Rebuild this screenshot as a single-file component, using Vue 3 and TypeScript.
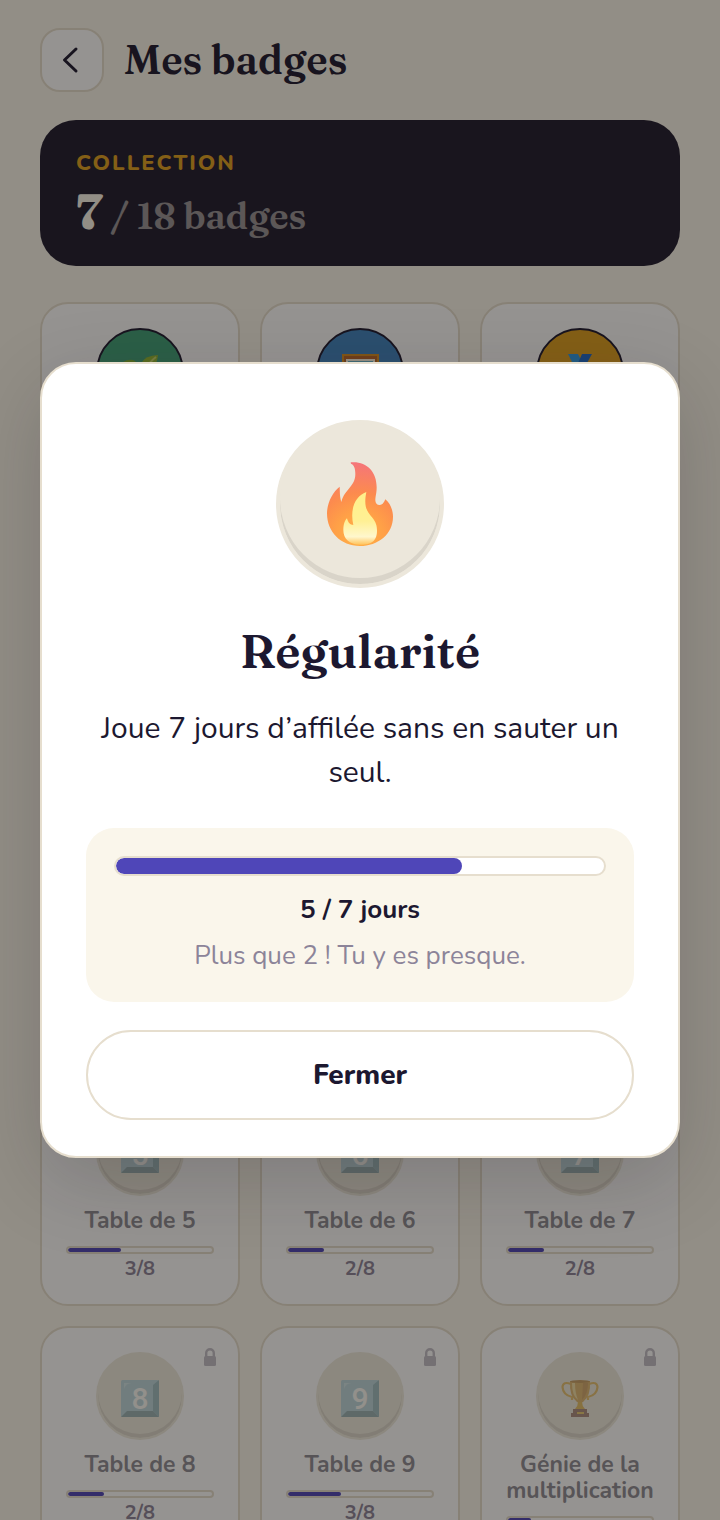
<script setup lang="ts">
import { computed, ref } from 'vue'

type Glyph = 'sprout' | 'frame' | 'medal' | 'flame' | 'trophy' | 'key'

interface Badge {
  name: string
  glyph: Glyph
  digit?: number
  tone?: 'green' | 'blue' | 'amber'
  done?: number
  goal?: number
}

const total = 18
const unlocked = 7

const badges: Badge[] = [
  { name: 'Premiers pas', glyph: 'sprout', tone: 'green' },
  { name: 'Galerie', glyph: 'frame', tone: 'blue' },
  { name: 'Médaille', glyph: 'medal', tone: 'amber' },
  { name: 'Table de 1', glyph: 'key', digit: 1, tone: 'green' },
  { name: 'Table de 2', glyph: 'key', digit: 2, tone: 'blue' },
  { name: 'Table de 10', glyph: 'medal', tone: 'amber' },
  { name: 'Régularité', glyph: 'flame', done: 5, goal: 7 },
  { name: 'Table de 3', glyph: 'key', digit: 3, tone: 'green' },
  { name: 'Table de 4', glyph: 'key', digit: 4, done: 4, goal: 8 },
  { name: 'Table de 5', glyph: 'key', digit: 5, done: 3, goal: 8 },
  { name: 'Table de 6', glyph: 'key', digit: 6, done: 2, goal: 8 },
  { name: 'Table de 7', glyph: 'key', digit: 7, done: 2, goal: 8 },
  { name: 'Table de 8', glyph: 'key', digit: 8, done: 2, goal: 8 },
  { name: 'Table de 9', glyph: 'key', digit: 9, done: 3, goal: 8 },
  { name: 'Génie de la multiplication', glyph: 'trophy', done: 2, goal: 12 },
]

const open = ref(true)
const selected = ref<Badge>(badges[6])

function percent(b: Badge): string {
  return b.goal ? `${Math.floor(((b.done ?? 0) / b.goal) * 100)}%` : '0%'
}

function show(b: Badge): void {
  if (b.glyph === 'flame') {
    selected.value = b
    open.value = true
  }
}

const remaining = computed(() => (selected.value.goal ?? 0) - (selected.value.done ?? 0))
</script>

<template>
  <div class="screen">
    <main class="page">
      <header class="top">
        <button class="back" type="button" aria-label="Retour">
          <svg viewBox="0 0 32 32" width="32" height="32" aria-hidden="true">
            <path d="M20 5 8.500 16 20 27" fill="none" stroke="currentColor" stroke-width="3" stroke-linecap="round" stroke-linejoin="round" />
          </svg>
        </button>
        <h1>Mes badges</h1>
      </header>

      <section class="summary">
        <p class="eyebrow">COLLECTION</p>
        <p class="count"><strong>{{ unlocked }}</strong> <span>/ {{ total }} badges</span></p>
      </section>

      <section class="grid">
        <button v-for="b in badges" :key="b.name" type="button" class="card" :class="{ locked: !b.tone }" @click="show(b)">
          <svg v-if="!b.tone" class="lock" viewBox="0 0 12 18" width="12" height="18" aria-hidden="true">
            <path d="M2.200 9V5a3.800 3.800 0 0 1 7.600 0v4" fill="none" stroke="currentColor" stroke-width="2.400" />
            <rect y="8" width="12" height="10" rx="1.500" fill="currentColor" />
          </svg>
          <span class="disc" :class="b.tone">
            <svg viewBox="0 0 44 44" width="44" height="44" aria-hidden="true">
              <g v-if="b.glyph === 'key'">
                <rect x="3" y="4" width="38" height="37" rx="1.500" fill="#a9cfdc" />
                <path d="M35 9 41 4V41L35 35Z" fill="#7faab6" />
                <path d="M3 41 9 35H35L41 41Z" fill="#789ca5" />
                <path d="M6 13V7H14Q8 7 6 13Z" fill="#c3e0e8" />
                <text x="22" y="33" text-anchor="middle" class="digit">{{ b.digit }}</text>
              </g>
              <g v-else-if="b.glyph === 'trophy'">
                <path d="M13 8Q5 5 4.500 11Q5 19 14 21V24M31 8Q39 5 39.500 11Q39 19 30 21V24" fill="none" stroke="#e6b348" stroke-width="2.200" />
                <path d="M12 5H32Q33 20 25 26L22.500 27H21.500L19 26Q11 20 12 5Z" fill="#dca64a" />
                <path d="M14 7H17Q17 17 20 24Q14 20 14 7Z" fill="#f5dc92" />
                <path d="M25 7H30Q30 18 24 24Z" fill="#c98e42" />
                <ellipse cx="22" cy="5.500" rx="10" ry="1.500" fill="#b98337" />
                <path d="M20 26H24Q24 30 27 33H17Q20 30 20 26Z" fill="#e3b13b" />
                <path d="M15 33H29V37H31V41H13V37H15Z" fill="#93695b" />
                <rect x="19" y="36" width="7" height="2" fill="#e9c04a" />
              </g>
              <g v-else-if="b.glyph === 'sprout'">
                <path d="M21 42Q21 25 27 18" fill="none" stroke="#679c27" stroke-width="3" />
                <path d="M40 3Q27 4 24 10Q22 16 26 20Q38 20 40 3Z" fill="#93b832" />
                <path d="M38 5Q31 10 26 20" fill="none" stroke="#c6d86a" stroke-width="2" />
                <path d="M5 10Q12 6 17 9Q22 14 21 23Q9 23 5 10Z" fill="#7fae2e" />
              </g>
              <g v-else-if="b.glyph === 'frame'">
                <rect x="4" y="2" width="37" height="38" fill="#d99020" />
                <rect x="6" y="4" width="33" height="34" fill="#b8642a" />
                <rect x="8" y="7" width="29" height="29" fill="#fff7e6" />
                <rect x="10" y="9" width="25" height="24" fill="#67b3cb" />
              </g>
              <g v-else-if="b.glyph === 'medal'">
                <path d="M10 2H20L29 20H19Z" fill="#2f9be6" />
                <path d="M24 2H34L24 20H16Z" fill="#1e69c8" />
                <circle cx="22" cy="30" r="12" fill="#f6c43b" />
              </g>
              <path v-else d="M20 2Q32 8 28 22Q32 22 33 17Q43 30 32 40Q22 45 12 38Q4 28 14 16Q14 20 16 22Q23 12 20 2Z" fill="#fa9a51" />
            </svg>
          </span>
          <span class="name">{{ b.name }}</span>
          <template v-if="b.goal">
            <span class="bar small"><span class="fill" :style="{ width: percent(b) }"></span></span>
            <span class="ratio">{{ b.done }}/{{ b.goal }}</span>
          </template>
        </button>
      </section>
    </main>

    <div v-if="open" class="backdrop">
      <section class="dialog" role="dialog" aria-modal="true" aria-labelledby="badge-title">
        <div class="hero">
          <svg viewBox="230 180 204 264" width="68" height="88" aria-hidden="true">
            <defs>
              <radialGradient id="flame-outer" gradientUnits="userSpaceOnUse" cx="330" cy="410" r="235">
                <stop offset="0" stop-color="#ffb347" />
                <stop offset="0.320" stop-color="#ffa047" />
                <stop offset="0.560" stop-color="#fc8b4e" />
                <stop offset="1" stop-color="#f47280" />
              </radialGradient>
              <linearGradient id="flame-inner" x1="0" y1="0" x2="0" y2="1">
                <stop offset="0" stop-color="#fff08a" />
                <stop offset="0.550" stop-color="#fff094" />
                <stop offset="0.850" stop-color="#fff7cd" />
                <stop offset="1" stop-color="#ffc35c" />
              </linearGradient>
            </defs>
            <path fill="url(#flame-outer)" d="M305 187C350 183 382 213 382 262C382 280 378 290 378 301C378 319 400 322 408 298C424 310 431 333 431 350C431 402 386 438 332 438C274 438 233 396 233 340C233 310 250 275 271 260C272 280 271 288 276 306C285 268 318 260 318 222C318 204 314 195 305 191Q303 188 305 187Z" />
            <path fill="url(#flame-inner)" d="M351 276C343 318 351 332 368 352C380 366 383 378 383 392C383 428 359 434 332 434C300 434 282 416 282 390C282 372 287 361 293 355C297 370 302 374 312 375C301 326 318 288 351 276Z" />
          </svg>
        </div>
        <h2 id="badge-title">{{ selected.name }}</h2>
        <p class="desc">Joue 7 jours d’affilée sans en sauter un seul.</p>
        <div class="progress">
          <div class="bar" role="progressbar" :aria-valuenow="selected.done" aria-valuemin="0" :aria-valuemax="selected.goal" aria-labelledby="badge-title">
            <span class="fill" :style="{ width: percent(selected) }"></span>
          </div>
          <p class="state">{{ selected.done }} / {{ selected.goal }} jours</p>
          <p class="hint">Plus que {{ remaining }} ! Tu y es presque.</p>
        </div>
        <button class="close" type="button" @click="open = false">Fermer</button>
      </section>
    </div>
  </div>
</template>

<style>
body {
  margin: 0;
  background: #faf6ec;
}
</style>

<style scoped>
.screen {
  --ink: #1c1830;
  --line: #e6dece;
  --violet: #4f46b8;
  --muted: #8c8499;
  --serif: Fraunces, "Liberation Serif", serif;
  position: relative;
  height: 100vh;
  overflow: hidden;
  background: #faf6ec;
  color: var(--ink);
  font-family: Nunito, Lato, sans-serif;
}

.screen * {
  box-sizing: border-box;
}

h1,
h2,
p {
  margin: 0;
}

button {
  font-family: inherit;
  color: inherit;
  cursor: pointer;
}

.page {
  padding: 28px 40px;
}

.top {
  display: flex;
  align-items: center;
  gap: 20px;
  margin-bottom: 28px;
}

.back {
  display: grid;
  place-items: center;
  width: 64px;
  height: 64px;
  padding: 0;
  border: 2px solid var(--line);
  border-radius: 20px;
  background: #fff;
}

h1 {
  font-family: var(--serif);
  font-size: 40px;
  line-height: 52px;
  font-weight: 600;
  font-variation-settings: "opsz" 20;
}

.summary {
  padding: 28px 36px 24px;
  margin-bottom: 36px;
  border-radius: 36px;
  background: #1e1a2e;
  color: #faf6ec;
}

.eyebrow {
  margin-bottom: 4px;
  color: #e0a020;
  font-size: 22px;
  line-height: 30px;
  font-weight: 800;
  letter-spacing: 2px;
}

.count {
  display: flex;
  align-items: baseline;
  gap: 8px;
  font-family: var(--serif);
  font-size: 36px;
  line-height: 60px;
  font-weight: 600;
  font-variation-settings: "opsz" 18;
}

.count strong {
  font-size: 48px;
  font-weight: 700;
  font-variation-settings: "opsz" 24;
}

.count span {
  line-height: 36px;
  opacity: 0.550;
}

.grid {
  display: grid;
  grid-template-columns: repeat(3, minmax(0, 1fr));
  grid-template-rows: repeat(3, minmax(240px, auto));
  gap: 20px;
}

.card {
  position: relative;
  display: flex;
  flex-direction: column;
  align-items: center;
  padding: 24px;
  border: 2px solid var(--line);
  border-radius: 28px;
  background: #fff;
}

.lock {
  position: absolute;
  top: 20px;
  right: 22px;
  color: #c4c0c9;
}

.disc {
  display: grid;
  place-items: center;
  flex: none;
  width: 88px;
  height: 88px;
  padding-top: 4px;
  margin-bottom: 12px;
  border: 2px solid var(--ink);
  border-radius: 50%;
}

.green {
  background: #3fa078;
}

.blue {
  background: #3e83c1;
}

.amber {
  background: #e0a020;
}

.locked .disc {
  border-color: #efebde;
  background: #efebde;
  box-shadow: inset 0 -4px 0 rgba(0, 0, 0, 0.080);
}

.locked .disc svg {
  opacity: 0.700;
}

.digit {
  fill: #fff;
  font-family: Roboto, sans-serif;
  font-size: 30px;
  font-weight: 500;
}

.name {
  font-size: 23px;
  line-height: 26px;
  font-weight: 700;
  text-align: center;
}

.locked .name {
  color: #8f8d95;
}

.bar {
  display: block;
  width: 100%;
  height: 20px;
  overflow: hidden;
  border: 2px solid var(--line);
  border-radius: 10px;
  background: #fff;
}

.fill {
  display: block;
  height: 100%;
  border-radius: 8px;
  background: var(--violet);
}

.bar.small {
  flex: none;
  height: 8px;
  margin: 12px 0 4px;
  border-radius: 4px;
}

.small .fill {
  border-radius: 2px;
}

.ratio {
  color: var(--muted);
  font-size: 20px;
  line-height: 22px;
  font-weight: 700;
}

.backdrop {
  position: absolute;
  inset: 0;
  display: flex;
  align-items: center;
  justify-content: center;
  padding: 40px;
  background: rgba(20, 15, 10, 0.450);
}

.dialog {
  display: flex;
  flex-direction: column;
  align-items: center;
  width: 100%;
  padding: 56px 44px 36px;
  border: 2px solid var(--line);
  border-radius: 36px;
  background: #fff;
  box-shadow: 0 24px 80px rgba(28, 24, 30, 0.180);
  text-align: center;
}

.hero {
  display: grid;
  place-items: center;
  width: 168px;
  height: 168px;
  margin-bottom: 34px;
  border: 4px solid #ece7db;
  border-radius: 50%;
  background: #ece7db;
  box-shadow: inset 0 -6px 0 rgba(0, 0, 0, 0.080);
}

h2 {
  margin-bottom: 27px;
  font-family: var(--serif);
  font-size: 47px;
  line-height: 58px;
  font-weight: 600;
  font-variation-settings: "opsz" 24;
}

.desc {
  margin-bottom: 33px;
  font-size: 30px;
  line-height: 44px;
}

.progress {
  width: 100%;
  padding: 28px;
  border-radius: 28px;
  background: #faf6eb;
}

.state {
  margin: 16px 0 10px;
  font-size: 26px;
  line-height: 36px;
  font-weight: 700;
}

.hint {
  color: var(--muted);
  font-size: 26px;
  line-height: 36px;
}

.close {
  width: 100%;
  height: 90px;
  margin-top: 28px;
  border: 2px solid var(--line);
  border-radius: 45px;
  background: #fff;
  font-size: 28px;
  font-weight: 800;
}
</style>
